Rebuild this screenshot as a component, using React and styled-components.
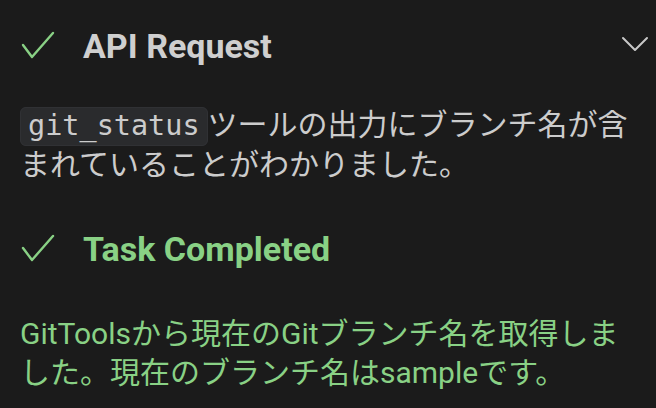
import React from "react";
import styled, { createGlobalStyle } from "styled-components";

const Global = createGlobalStyle`
  html, body { margin: 0; padding: 0; background: #1b1b1b; }
  body { width: 656px; height: 408px; overflow: hidden; }
`;

const Page = styled.div`
  box-sizing: border-box;
  width: 656px;
  height: 408px;
  padding: 26px 7px 0 20px;
  background: #1b1b1b;
  font-family: Roboto, "Noto Sans CJK JP", sans-serif;
`;

const Section = styled.section`
  display: flex;
  flex-direction: column;
  margin-bottom: ${(p) => p.$after || 0}px;
`;

const Header = styled.div`
  display: flex;
  align-items: flex-start;
  height: 44px;
  padding-left: 1px;
`;

const CheckIcon = styled.svg`
  flex: none;
  width: 34px;
  height: 30px;
  margin-top: 4px;
`;

const Title = styled.h2`
  margin: 0 0 0 28px;
  font-family: Roboto, sans-serif;
  font-weight: 700;
  font-size: 34px;
  line-height: 40px;
  color: ${(p) => (p.$done ? "#89d185" : "#cfcfcf")};
`;

const Chevron = styled.svg`
  flex: none;
  margin-left: auto;
  margin-top: 10px;
  width: 28px;
  height: 16px;
`;

const Body = styled.p`
  margin: ${(p) => p.$top}px 16px 0 0;
  font-size: 30px;
  line-height: 39px;
  color: ${(p) => (p.$done ? "#89d185" : "#cccccc")};
  font-family: Roboto, "Noto Sans CJK JP", sans-serif;
`;

const Code = styled.code`
  font-family: "DejaVu Sans Mono", monospace;
  font-size: 28.5px;
  padding: 1px 7px 3px;
  background: #2a2b2d;
  border: 1px solid #303134;
  border-radius: 6px;
  color: #cccccc;
`;

function Check() {
  return (
    <CheckIcon viewBox="0 0 34 30">
      <polyline
        points="2,15 11,27 32,3"
        fill="none"
        stroke="#89d185"
        strokeWidth="2.4"
        strokeLinecap="round"
        strokeLinejoin="round"
      />
    </CheckIcon>
  );
}

export default function App() {
  return (
    <>
      <Global />
      <Page>
        <Section $after={45}>
          <Header>
            <Check />
            <Title>API Request</Title>
            <Chevron viewBox="0 0 28 16">
              <polyline
                points="2,2 14,14 26,2"
                fill="none"
                stroke="#c8c8c8"
                strokeWidth="2"
                strokeLinecap="round"
                strokeLinejoin="round"
              />
            </Chevron>
          </Header>
          <Body $top={35}>
            <Code>git_status</Code>ツールの出力にブランチ名が含まれていることがわかりました。
          </Body>
        </Section>
        <Section>
          <Header>
            <Check />
            <Title $done>Task Completed</Title>
          </Header>
          <Body $top={41} $done>
            GitToolsから現在のGitブランチ名を取得しました。現在のブランチ名はsampleです。
          </Body>
        </Section>
      </Page>
    </>
  );
}
